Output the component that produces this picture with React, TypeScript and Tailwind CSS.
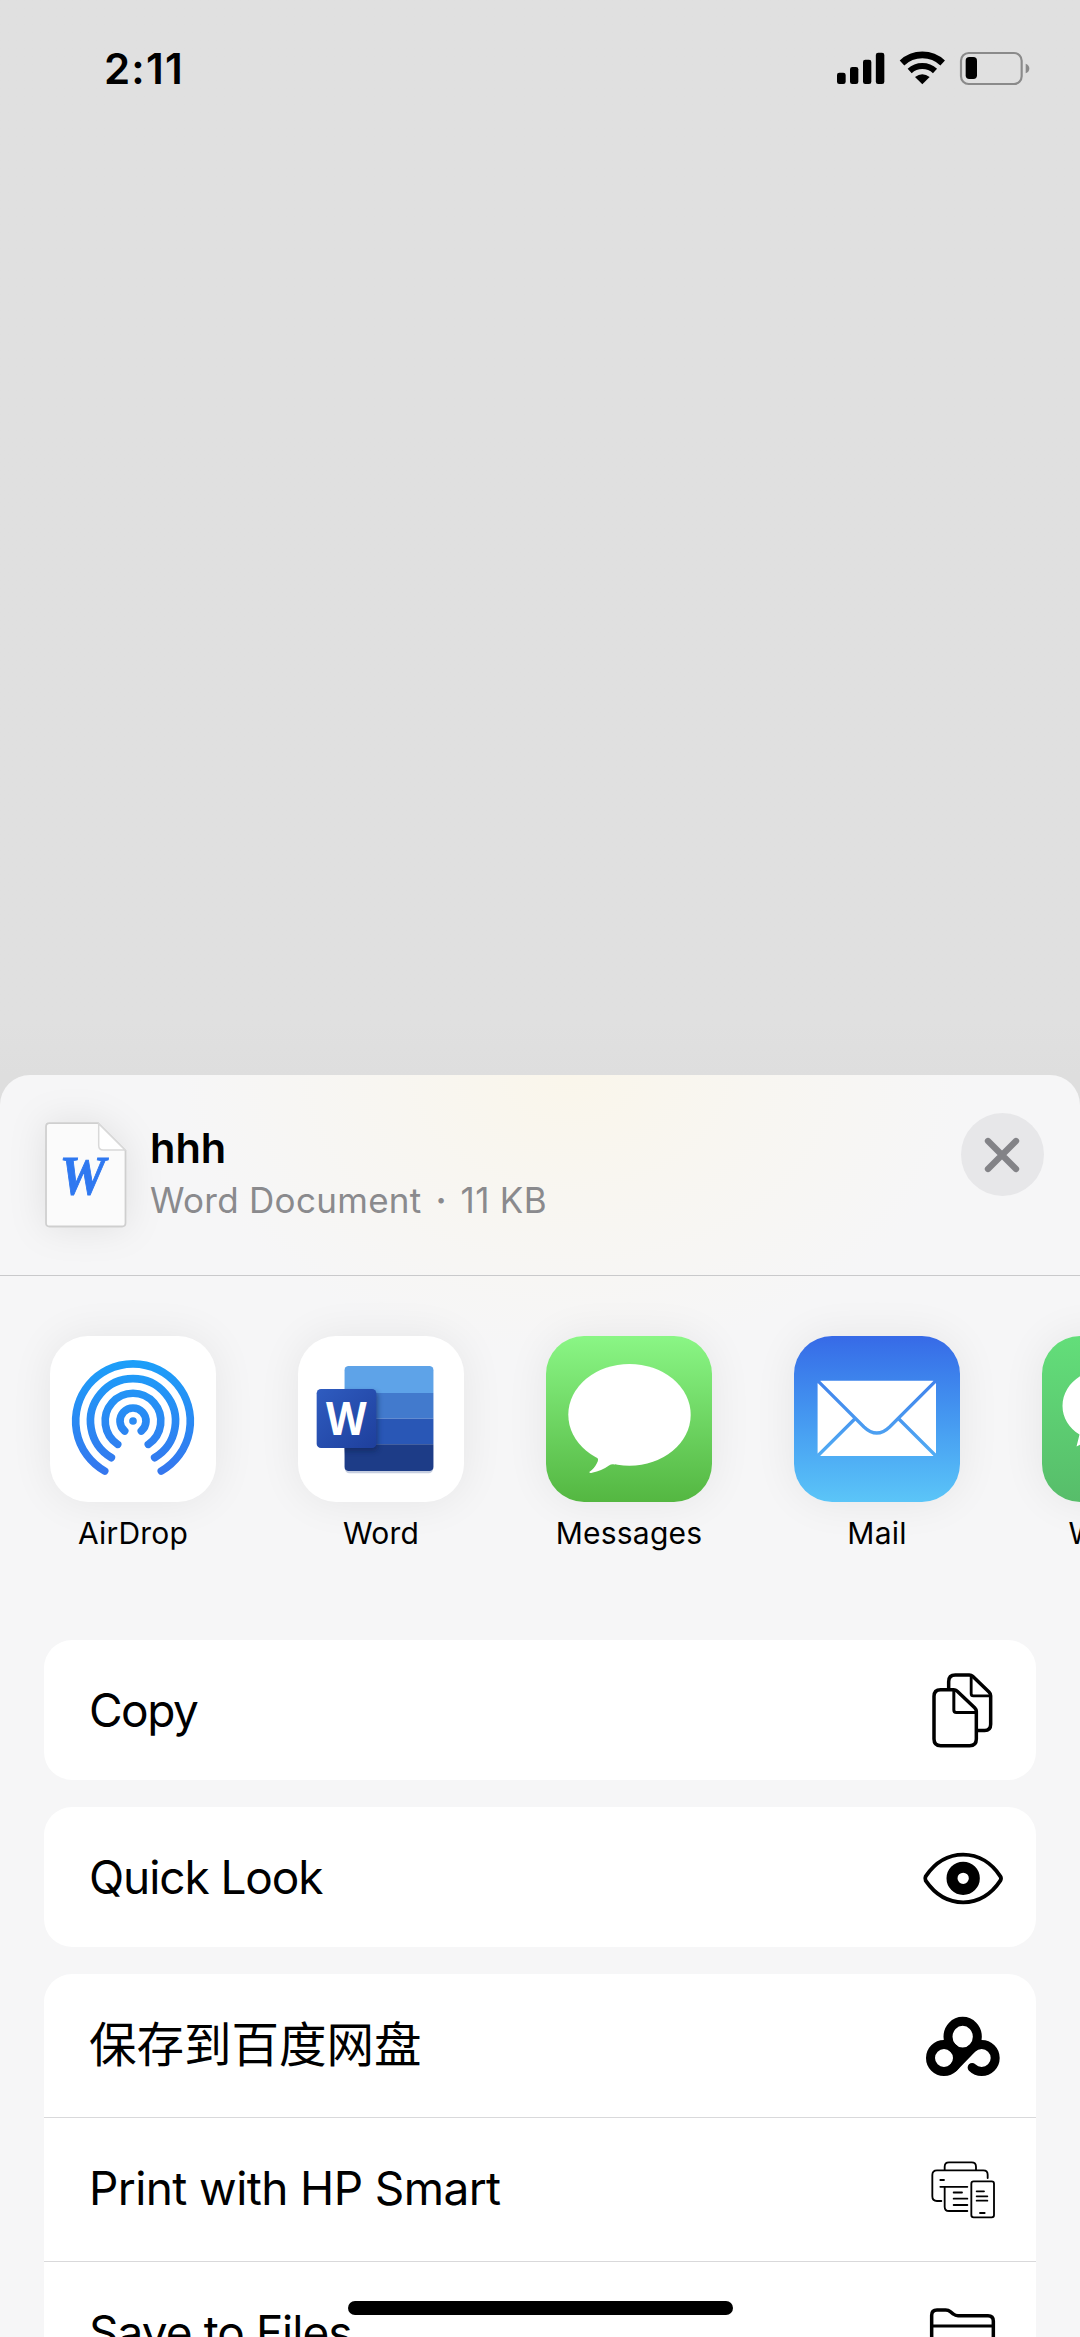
import React from 'react';

function StatusIcons() {
  return (
    <svg className="h-[70px] w-[220px]" viewBox="0 0 660 210" fill="none">
      <g fill="#000">
        <rect x="51" y="113" width="26" height="34" rx="7" />
        <rect x="90" y="96" width="25" height="51" rx="7" />
        <rect x="129" y="74" width="25" height="73" rx="7" />
        <rect x="167.5" y="53" width="25.5" height="94" rx="7" />
        <path d="M307 148 L285 126 Q307 110 329 126 Z" />
      </g>
      <g stroke="#000">
        <path d="M246 84 A89 89 0 0 1 368 84" strokeWidth="20" />
        <path d="M269 108 A56 56 0 0 1 345 108" strokeWidth="18" />
      </g>
      <rect x="423" y="54" width="182" height="93" rx="23" stroke="#8a8a8a" strokeWidth="6.500" />
      <rect x="437" y="66" width="34" height="66" rx="11" fill="#000" />
      <path d="M617 86 Q628 90 628 100.500 Q628 111 617 115 Z" fill="#8a8a8a" />
    </svg>
  );
}

function DocumentIcon() {
  return (
    <svg className="h-[106px] w-[82px] drop-shadow-[0_0_18px_rgba(0,0,0,0.09)]" viewBox="0 0 82 106">
      <path
        d="M4.500 1.200 H53 L80.500 28.500 V101 Q80.500 104.500 77 104.500 H4.500 Q1 104.500 1 101 V4.700 Q1 1.200 4.500 1.200 Z"
        fill="#fbfbfb"
        stroke="#cfcfcf"
        strokeWidth="1.800"
      />
      <path d="M53.700 1.800 V23.500 Q53.700 28 58.200 28 H80 Z" fill="#fff" stroke="#d9d9d9" strokeWidth="1.500" />
      <text
        x="14.500"
        y="71.500"
        textLength="46"
        lengthAdjust="spacingAndGlyphs"
        fill="#2f78f0"
        stroke="#2f78f0"
        strokeWidth="0.900"
        className="font-['Liberation_Serif',serif] text-[55px] font-bold italic"
      >
        W
      </text>
    </svg>
  );
}

function CloseIcon() {
  return (
    <svg className="size-[83px]" viewBox="0 0 249 249">
      <circle cx="124.500" cy="124.500" r="124.500" fill="#e7e7e9" />
      <path d="M81 84 L165 168 M165 84 L81 168" stroke="#838387" strokeWidth="19" strokeLinecap="round" />
    </svg>
  );
}

function AirDropIcon() {
  return (
    <svg className="size-full" viewBox="0 0 498 498" fill="none">
      <defs>
        <linearGradient id="airdrop" gradientUnits="userSpaceOnUse" x1="0" y1="72" x2="0" y2="417">
          <stop offset="0" stopColor="#1c9ff9" />
          <stop offset="1" stopColor="#3576ee" />
        </linearGradient>
      </defs>
      <g stroke="url(#airdrop)" strokeWidth="23" strokeLinecap="round">
        <path d="M164 405 A172 172 0 1 1 334 405" />
        <path d="M184 365 A127.500 127.500 0 1 1 314 365" />
        <path d="M203 325 A83.500 83.500 0 1 1 295 325" />
        <path d="M224 285 A39 39 0 1 1 274 285" />
      </g>
      <circle cx="249" cy="255" r="11.500" fill="#2a8bf4" />
    </svg>
  );
}

function WordIcon() {
  return (
    <svg className="size-full" viewBox="0 0 498 498">
      <defs>
        <clipPath id="wordPage">
          <rect x="139" y="90" width="268" height="315" rx="13" />
        </clipPath>
        <linearGradient id="wordTile" x1="0" y1="0" x2="1" y2="1">
          <stop offset="0" stopColor="#2f5cc0" />
          <stop offset="1" stopColor="#1e3f9c" />
        </linearGradient>
        <filter id="soft" x="-30%" y="-30%" width="160%" height="160%">
          <feGaussianBlur stdDeviation="8" />
        </filter>
      </defs>
      <rect x="141" y="300" width="264" height="112" rx="13" fill="#1d3b85" opacity="0.25" />
      <g clipPath="url(#wordPage)">
        <rect x="139" y="90" width="268" height="81" fill="#5ea3e8" />
        <rect x="139" y="171" width="268" height="77" fill="#427acd" />
        <rect x="139" y="248" width="268" height="77" fill="#2957b6" />
        <rect x="139" y="325" width="268" height="80" fill="#1d3c87" />
        <rect x="62" y="168" width="178" height="178" rx="13" fill="#0c2050" opacity="0.5" filter="url(#soft)" />
      </g>
      <rect x="56" y="159" width="179" height="177" rx="13" fill="url(#wordTile)" />
      <text
        x="84"
        y="296"
        textLength="122"
        lengthAdjust="spacingAndGlyphs"
        fill="#fff"
        className="font-['Open_Sans',sans-serif] text-[137px] font-bold"
      >
        W
      </text>
    </svg>
  );
}

function MessagesIcon() {
  return (
    <svg className="size-full" viewBox="0 0 166 166" fill="#fff">
      <ellipse cx="83.500" cy="78.800" rx="61.200" ry="50.900" />
      <path d="M50 120 Q53.500 123 51 127 Q48 133 43.300 136 Q43.500 137.500 46 136.800 Q56 134.500 63 129.400 Q65.500 127.800 69 128.500 L74 115 Z" />
    </svg>
  );
}

function MailIcon() {
  return (
    <svg className="size-full" viewBox="0 0 166 166" fill="none">
      <defs>
        <linearGradient id="mail" gradientUnits="userSpaceOnUse" x1="0" y1="0" x2="0" y2="166">
          <stop offset="0" stopColor="#376ae7" />
          <stop offset="1" stopColor="#5bc5f8" />
        </linearGradient>
      </defs>
      <rect x="23.600" y="44.700" width="118.400" height="75.300" rx="3.500" fill="#fff" />
      <g stroke="url(#mail)" strokeWidth="3.300">
        <path d="M23.600 44.700 L70 91 Q82.800 103.200 95.600 91 L142 44.700" />
        <path d="M61.200 82.500 L23.600 120 M104.400 82.500 L142 120" />
      </g>
    </svg>
  );
}

function WeChatIcon() {
  return (
    <svg className="size-full" viewBox="0 0 166 166" fill="#fff">
      <path d="M64 33 C40 33 20.500 49 20.500 70 C20.500 82 27 92 37.500 98.500 L34.500 110.500 L48 104 Q56 107 64 107 C88 107 107.500 90 107.500 70 C107.500 49 88 33 64 33 Z" />
    </svg>
  );
}

function CopyIcon() {
  return (
    <svg className="h-[140px] w-[110px]" viewBox="150 60 330 420" fill="none" stroke="#000" strokeWidth="10.500" strokeLinejoin="round">
      <path d="M222 229 Q222 209 242 209 H281 Q287 209 291 213 L344 263 Q349 268 349 274 V357 Q349 377 329 377 H242 Q222 377 222 357 Z" />
      <path d="M281.500 209 V270 Q281.500 277.500 289 277.500 H349" strokeWidth="9" />
      <path d="M266 206 V185 Q266 165 286 165 H328 Q334 165 338 169 L387 216 Q392 221 392 227 V313 Q392 331.500 374 331.500 H352" />
      <path d="M333.500 165 V221 Q333.500 227.500 340 227.500 H392" strokeWidth="8.500" />
    </svg>
  );
}

function EyeIcon() {
  return (
    <svg className="h-[140px] w-[110px]" viewBox="150 561 330 420" fill="none">
      <path
        d="M197 769 C223 731 262 704 309.500 704 C357 704 396 731 421 769 Q425 775.500 421 782 C396 820 357 847 309.500 847 C262 847 223 820 197 782 Q194 775.500 197 769 Z"
        stroke="#000"
        strokeWidth="11.500"
      />
      <circle cx="309.500" cy="775" r="33.500" stroke="#000" strokeWidth="33" />
    </svg>
  );
}

function NetdiskIcon() {
  return (
    <svg className="h-[143px] w-[110px]" viewBox="150 42 330 429" fill="none" stroke="#000" strokeWidth="27">
      <ellipse cx="308" cy="230" rx="44" ry="46" />
      <circle cx="252" cy="294" r="40.500" />
      <path d="M280.600 322.600 L336.400 265.400 A40.500 40.500 0 1 1 336.400 322.600" strokeLinecap="round" />
      <path d="M270 260 L290 264 L332 268 L284 318 L286 290 Z" fill="#000" stroke="none" />
    </svg>
  );
}

function PrinterIcon() {
  return (
    <svg className="h-[143px] w-[110px]" viewBox="150 474 330 429" fill="none" stroke="#000" strokeWidth="5.500" strokeLinecap="round">
      <path d="M254 629 V620 Q254 607 267 607 H335 Q348 607 348 620 V629" />
      <path d="M244 723 H231 Q217 723 217 709 V645 Q217 631 231 631 H370 Q383 631 383 644 V654" />
      <path d="M241 660 H252 M241 680.500 H322 M254 681 V740 Q254 753 267 753 H322" />
      <path d="M281 697.500 H306 M281 716 H322 M281 735 H322" />
      <rect x="334" y="664" width="68" height="108" rx="7" />
      <path d="M350 694 H372 M350 709 H382 M350 722 H382 M360 759 H374" />
    </svg>
  );
}

function FolderIcon() {
  return (
    <svg className="h-[143px] w-[110px]" viewBox="150 906 330 429" fill="none" stroke="#000" strokeWidth="10.500">
      <path d="M215 1320 V1066 Q215 1050 231 1050 H257 Q265 1050 271 1055 L280 1062 Q286 1067 294 1067 H384 Q400 1067 400 1083 V1320 Z" />
      <path d="M215 1098 H400" strokeWidth="8.500" />
    </svg>
  );
}

const apps = [
  { name: 'AirDrop', tile: 'bg-white', icon: <AirDropIcon /> },
  { name: 'Word', tile: 'bg-white', icon: <WordIcon /> },
  { name: 'Messages', tile: 'bg-linear-to-b from-[#8af685] to-[#54b741]', icon: <MessagesIcon /> },
  { name: 'Mail', tile: 'bg-linear-to-b from-[#376ae7] to-[#5bc5f8]', icon: <MailIcon /> },
  { name: 'WeChat', tile: 'bg-linear-to-b from-[#63de7a] to-[#57bd6a]', icon: <WeChatIcon /> },
];

const groups = [
  [{ label: 'Copy', text: 'tracking-[-1.5px]', icon: <CopyIcon /> }],
  [{ label: 'Quick Look', text: 'tracking-[-1.1px]', icon: <EyeIcon /> }],
  [
    {
      label: '保存到百度网盘',
      text: "font-['Noto_Sans_CJK_SC',sans-serif] text-[47.5px] pb-2",
      icon: <NetdiskIcon />,
    },
    { label: 'Print with HP Smart', text: 'tracking-[-0.6px] pb-1', icon: <PrinterIcon /> },
    { label: 'Save to Files', text: 'tracking-[-0.95px] pb-1', icon: <FolderIcon /> },
  ],
];

export default function App() {
  return (
    <div className="relative flex h-[2337px] w-[1080px] flex-col overflow-hidden bg-[#e0e0e0] font-['Inter',sans-serif] text-black">
      <div className="h-[1075px] shrink-0 bg-linear-to-b from-[#e0e0e0] from-95% to-[#dedede]">
        <div className="flex justify-between pt-[35px] pr-10 pl-[104px]">
          <div className="text-[42px] leading-[68px] font-semibold tracking-[1.2px]">2:11</div>
          <StatusIcons />
        </div>
      </div>

      <div className="bg-[#dedede]">
        <div className="h-[1320px] rounded-t-[30px] bg-[#f6f6f7] bg-[radial-gradient(ellipse_400px_280px_at_570px_0px,#faf6eb_0%,#f8f6f1_45%,#f6f6f7_100%)]">
          <header className="flex h-[201px] border-b border-[#c9c9cb] pr-9 pl-[45px]">
            <div className="pt-[47px]">
              <DocumentIcon />
            </div>
            <div className="flex flex-1 flex-col pt-[46px] pl-[23px]">
              <div className="text-[41.5px] leading-[55px] font-semibold">hhh</div>
              <div className="flex text-[35px] leading-[49px] tracking-[0.3px] text-[#8a8a8d]">
                <span>Word Document</span>
                <span className="w-[39px] text-center font-semibold">·</span>
                <span>11 KB</span>
              </div>
            </div>
            <button className="mt-[38px] size-[83px] rounded-full" aria-label="Close">
              <CloseIcon />
            </button>
          </header>

          <div className="flex h-[364px] gap-[82px] overflow-hidden pt-[60px] pl-[50px]">
            {apps.map((app) => (
              <div key={app.name} className="flex w-[166px] shrink-0 flex-col items-center">
                <div
                  className={`size-[166px] overflow-hidden rounded-[38px] shadow-[0_0_44px_rgba(0,0,0,0.07)] ${app.tile}`}
                >
                  {app.icon}
                </div>
                <div className="pt-[11px] text-[30px] leading-[40px] tracking-[0.2px] whitespace-nowrap">{app.name}</div>
              </div>
            ))}
          </div>

          <div className="flex flex-col gap-[27px] px-11">
            {groups.map((rows) => (
              <div key={rows[0].label} className="divide-y divide-[#d9d9db] rounded-[28px] bg-white">
                {rows.map((row) => (
                  <div key={row.label} className="flex items-center justify-between pr-4 pl-[45px]">
                    <span className={`text-[46px] leading-[60px] ${row.text}`}>{row.label}</span>
                    {row.icon}
                  </div>
                ))}
              </div>
            ))}
          </div>
        </div>
      </div>

      <div className="absolute bottom-[22px] left-[348px] h-[14px] w-[385px] rounded-full bg-black" />
    </div>
  );
}
